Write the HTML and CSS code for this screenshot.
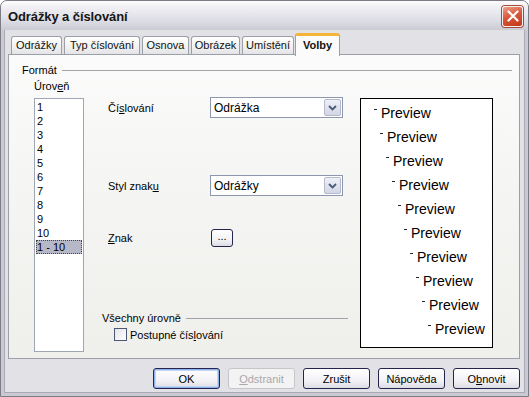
FILE: index.html
```html
<!DOCTYPE html>
<html lang="cs">
  <head>
    <meta charset="UTF-8" />
    <meta name="viewport" content="width=device-width, initial-scale=1.0" />
    <title>Odrážky a číslování</title>
    <link rel="stylesheet" href="styles.css">
  </head>
  <body>
    <div class="window">
      <!-- Title bar -->
      <div class="titlebar">
        <span class="title">Odrážky a číslování</span>
        <button class="close-button" title="Zavřít">
          <svg width="12" height="12" viewBox="0 0 12 12">
            <path d="M1.5 1.5 L10.5 10.5 M10.5 1.5 L1.5 10.5" stroke="#fff" stroke-width="2.2" stroke-linecap="round" fill="none" />
          </svg>
        </button>
      </div>

      <div class="client">
        <!-- Tabs -->
        <div class="tabs">
          <div class="tab tab-odrazky">Odrážky</div>
          <div class="tab tab-typ">Typ číslování</div>
          <div class="tab tab-osnova">Osnova</div>
          <div class="tab tab-obrazek">Obrázek</div>
          <div class="tab tab-umisteni">Umístění</div>
          <div class="tab tab-volby active">Volby</div>
        </div>

        <!-- Tab panel -->
        <div class="panel">
          <div class="group-head format-head">
            <span>Formát</span>
          </div>

          <div class="format">
            <div class="level-label">Úrov<u>e</u>ň</div>
            <div></div>
            <div></div>

            <ul class="listbox">
              <li>1</li>
              <li>2</li>
              <li>3</li>
              <li>4</li>
              <li>5</li>
              <li>6</li>
              <li>7</li>
              <li>8</li>
              <li>9</li>
              <li>10</li>
              <li class="selected">1 - 10</li>
            </ul>

            <div class="options">
              <div class="field field-numbering">
                <label>Čí<u>s</u>lování</label>
                <div class="select">
                  <span>Odrážka</span>
                  <span class="select-arrow">
                    <svg width="9" height="6" viewBox="0 0 9 6">
                      <path d="M1 1 L4.5 4.5 L8 1" stroke="#4b5878" stroke-width="1.8" fill="none" />
                    </svg>
                  </span>
                </div>
              </div>

              <div class="field field-style">
                <label>Styl znak<u>u</u></label>
                <div class="select">
                  <span>Odrážky</span>
                  <span class="select-arrow">
                    <svg width="9" height="6" viewBox="0 0 9 6">
                      <path d="M1 1 L4.5 4.5 L8 1" stroke="#4b5878" stroke-width="1.8" fill="none" />
                    </svg>
                  </span>
                </div>
              </div>

              <div class="field field-char">
                <label><u>Z</u>nak</label>
                <button class="xp-button small-button">...</button>
              </div>

              <div class="group-head all-levels">
                <span>Všechny úrovně</span>
              </div>

              <div class="check-row">
                <span class="checkbox"></span>
                <span>Postupné čís<u>l</u>ování</span>
              </div>
            </div>

            <!-- Preview -->
            <ul class="preview">
              <li style="--lvl: 0"><i class="bullet"></i>Preview</li>
              <li style="--lvl: 1"><i class="bullet"></i>Preview</li>
              <li style="--lvl: 2"><i class="bullet"></i>Preview</li>
              <li style="--lvl: 3"><i class="bullet"></i>Preview</li>
              <li style="--lvl: 4"><i class="bullet"></i>Preview</li>
              <li style="--lvl: 5"><i class="bullet"></i>Preview</li>
              <li style="--lvl: 6"><i class="bullet"></i>Preview</li>
              <li style="--lvl: 7"><i class="bullet"></i>Preview</li>
              <li style="--lvl: 8"><i class="bullet"></i>Preview</li>
              <li style="--lvl: 9"><i class="bullet"></i>Preview</li>
            </ul>
          </div>
        </div>

        <!-- Dialog buttons -->
        <div class="buttons">
          <button class="xp-button default">OK</button>
          <button class="xp-button" disabled><u>O</u>dstranit</button>
          <button class="xp-button">Zrušit</button>
          <button class="xp-button">Nápověda</button>
          <button class="xp-button">O<u>b</u>novit</button>
        </div>
      </div>
    </div>
  </body>
</html>
```

FILE: styles.css
```css
/* Page */
body {
  margin: 0;
  background-color: #ffffff;
  font-family: "Liberation Sans", Arial, sans-serif;
  font-size: 11px;
  color: #000;
}

u {
  text-decoration: underline;
  text-underline-offset: 1px;
}

/* Window frame */
.window {
  width: 529px;
  height: 397px;
  box-sizing: border-box;
  border: 1px solid #7b7c86;
  border-radius: 7px 7px 0 0;
  background-color: #c9cad3;
  display: flex;
  flex-direction: column;
  overflow: hidden;
}

/* Title bar */
.titlebar {
  height: 29px;
  flex: none;
  display: flex;
  align-items: center;
  padding: 0 5px 0 7px;
  background: linear-gradient(#fdfdfe 0%, #eeeef3 25%, #dcdce4 70%, #cbcbd5 100%);
}

.title {
  flex: 1;
  font-size: 13px;
  font-weight: bold;
  letter-spacing: -0.1px;
  color: #151515;
  margin-top: 2px;
}

.close-button {
  width: 21px;
  height: 21px;
  padding: 0;
  margin-top: 1px;
  border: 1px solid #f4f0f0;
  border-radius: 3px;
  background: linear-gradient(160deg, #eda08a 0%, #d9593a 45%, #c2371a 100%);
  box-shadow: 0 0 0 1px #a44a3a;
  display: flex;
  align-items: center;
  justify-content: center;
}

/* Client area */
.client {
  flex: 1;
  margin: 0 3px 3px 3px;
  padding: 3px 0 0 0;
  background-color: #e2e1e5;
  border: 1px solid #a9a9b3;
  border-top: none;
  display: flex;
  flex-direction: column;
}

/* Tabs */
.tabs {
  display: flex;
  align-items: flex-end;
  height: 21px;
  padding-left: 6px;
  gap: 2px;
  position: relative;
  z-index: 1;
}

.tab {
  box-sizing: border-box;
  height: 18px;
  line-height: 16px;
  text-align: center;
  border: 1px solid #9a9fa8;
  border-bottom: none;
  border-radius: 3px 3px 0 0;
  background: linear-gradient(#ffffff, #f1f1ef 60%, #e4e4e8);
  color: #111;
}

.tab-odrazky { width: 51px; }
.tab-typ { width: 76px; }
.tab-osnova { width: 47px; }
.tab-obrazek { width: 49px; }
.tab-umisteni { width: 52px; }

.tab.active {
  width: 45px;
  height: 23px;
  margin-bottom: -2px;
  margin-left: -1px;
  padding-top: 2px;
  border-top: 3px solid #f5b53b;
  background: #fbfbfb;
  font-weight: bold;
  line-height: 14px;
}

/* Tab panel */
.panel {
  box-sizing: border-box;
  height: 305px;
  margin: 0 4px 0 3px;
  padding: 9px 7px 0 13px;
  border: 1px solid #9a9fa8;
  background: linear-gradient(#fbfbfb, #f4f4f2 50%, #efefec);
}

.group-head {
  display: flex;
  align-items: center;
  height: 13px;
  line-height: 13px;
}

.group-head::after {
  content: "";
  flex: 1;
  margin-left: 5px;
  border-top: 1px solid #a3a3a8;
}

.format {
  display: grid;
  grid-template-columns: 50px 264px 145px;
  grid-template-rows: 18px 254px;
  margin: 3px 0 0 12px;
}

.level-label {
  line-height: 13px;
}

/* Level list */
.listbox {
  list-style: none;
  margin: 0;
  padding: 1px 0 0 0;
  box-sizing: border-box;
  border: 1px solid #9ea5b3;
  background-color: #fff;
}

.listbox li {
  height: 14px;
  line-height: 14px;
  margin: 0 1px;
  padding-left: 1px;
  box-sizing: border-box;
}

.listbox li.selected {
  background-color: #b7b8c7;
  outline: 1px dotted #444;
  outline-offset: -1px;
}

/* Options column */
.options {
  margin-left: 18px;
  display: flex;
  flex-direction: column;
}

.field {
  display: flex;
  align-items: center;
}

.field label {
  box-sizing: border-box;
  width: 108px;
  flex: none;
  padding-left: 6px;
}

.field-numbering { margin-top: -1px; }
.field-style { margin-top: 57px; }
.field-char { margin-top: 33px; }

.select {
  box-sizing: border-box;
  width: 133px;
  height: 21px;
  display: flex;
  align-items: center;
  justify-content: space-between;
  padding: 0 1px 0 3px;
  border: 1px solid #8d98ae;
  background-color: #fff;
  font-size: 12px;
}

.select-arrow {
  box-sizing: border-box;
  width: 17px;
  height: 17px;
  display: flex;
  align-items: center;
  justify-content: center;
  border: 1px solid #b4b9cc;
  border-radius: 2px;
  background: linear-gradient(#eef0f8, #d2d6e6);
}

.all-levels {
  margin-top: 65px;
}

.check-row {
  display: flex;
  align-items: center;
  height: 13px;
  margin-top: 3px;
  padding-left: 12px;
  gap: 3px;
}

.checkbox {
  box-sizing: border-box;
  width: 13px;
  height: 13px;
  border: 1px solid #4c5873;
  background: linear-gradient(135deg, #e4e4ea, #ffffff);
}

/* Preview */
.preview {
  list-style: none;
  box-sizing: border-box;
  height: 250px;
  margin: 0 0 0 12px;
  padding: 2px 0 0 0;
  border: 1px solid #000;
  background-color: #fff;
  font-size: 14px;
}

.preview li {
  height: 24px;
  line-height: 24px;
  white-space: nowrap;
  padding-left: calc(13px + var(--lvl) * 6px);
}

.bullet {
  display: inline-block;
  width: 3px;
  height: 1px;
  margin-right: 4px;
  background-color: #222;
  vertical-align: 8px;
}

/* XP buttons */
.xp-button {
  box-sizing: border-box;
  width: 67px;
  height: 21px;
  padding: 0;
  border: 1px solid #24244e;
  border-radius: 3px;
  background: linear-gradient(#ffffff, #f3f3f6 60%, #dcdce4);
  font-family: "Liberation Sans", Arial, sans-serif;
  font-size: 11px;
  color: #000;
}

.xp-button.default {
  box-shadow: inset 0 0 0 1px #8fb1ea, inset 0 0 0 2px #c4d6f6;
}

.xp-button:disabled {
  border-color: #c6c5c9;
  background: #f3f3f3;
  color: #a9a8ad;
}

.small-button {
  width: 22px;
  height: 18px;
  margin-left: 1px;
  line-height: 10px;
  padding-bottom: 4px;
}

/* Dialog buttons */
.buttons {
  display: flex;
  justify-content: flex-end;
  gap: 8px;
  margin-top: 9px;
  padding-right: 4px;
}
```
